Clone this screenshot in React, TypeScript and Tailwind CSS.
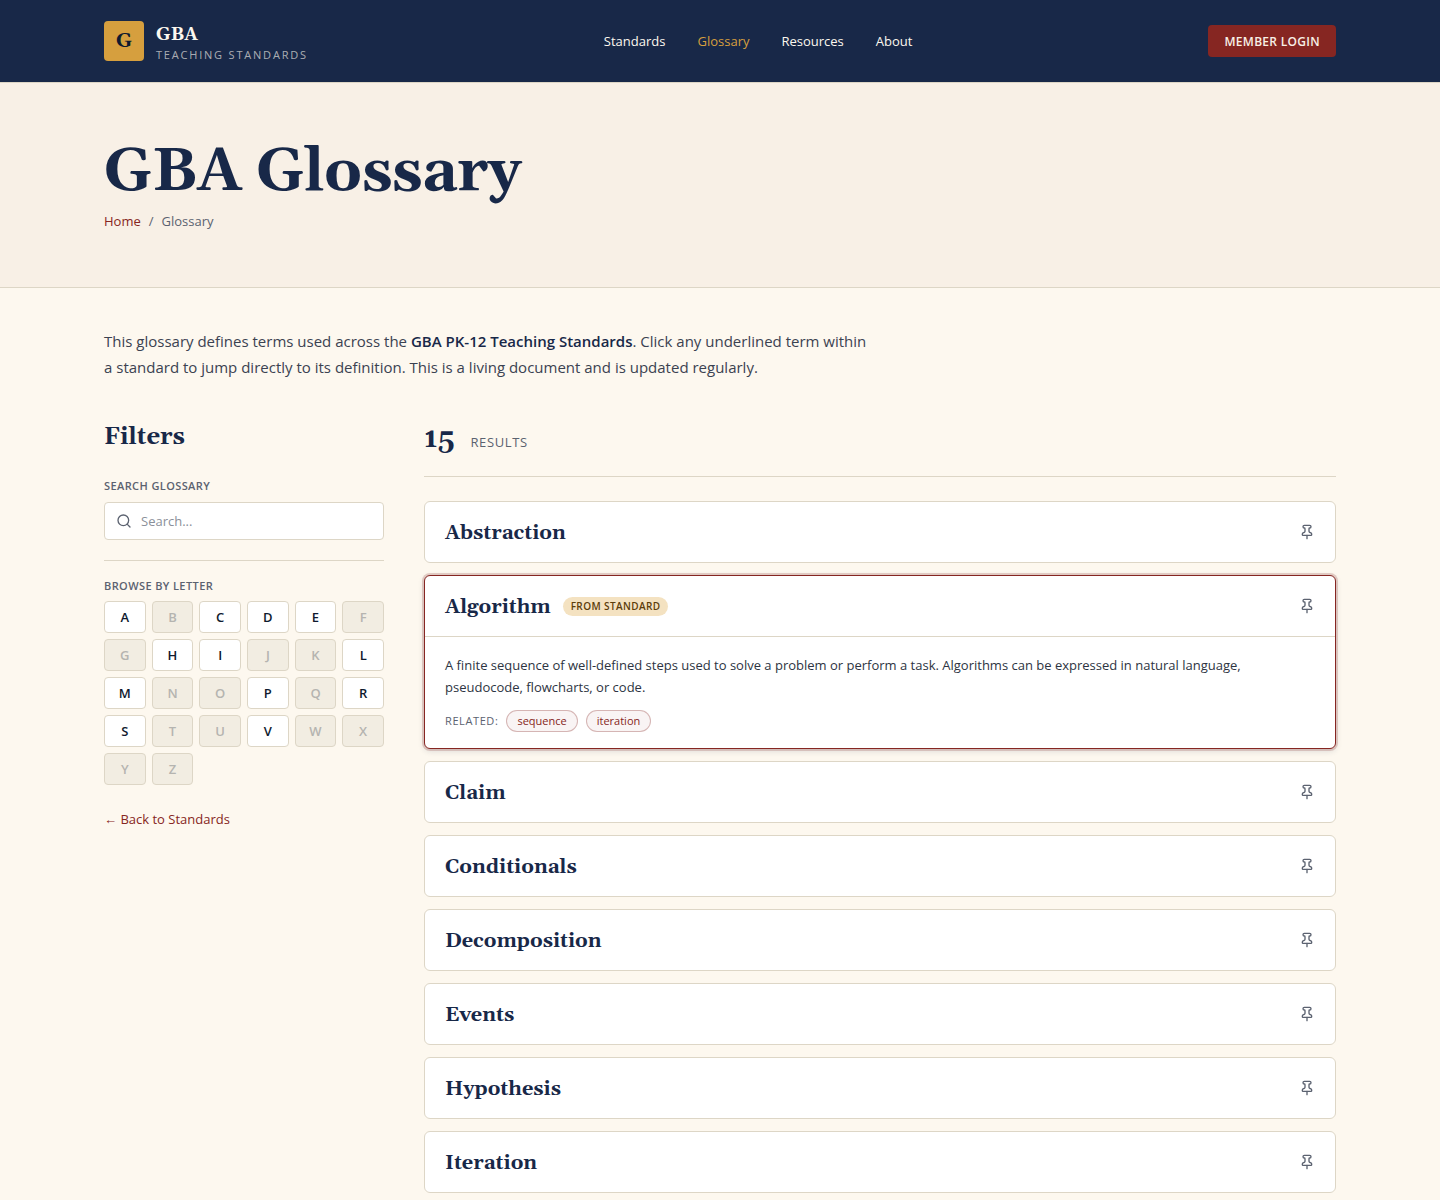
import { Pin, Search } from 'lucide-react';

interface Term {
  readonly name: string;
  readonly badge?: string;
  readonly definition?: string;
  readonly related?: readonly string[];
}

const NAV_ITEMS = ['Standards', 'Glossary', 'Resources', 'About'];

const LETTERS = 'ABCDEFGHIJKLMNOPQRSTUVWXYZ'.split('');
const ACTIVE_LETTERS = 'ACDEHILMPRSV';

const TERMS: readonly Term[] = [
  { name: 'Abstraction' },
  {
    name: 'Algorithm',
    badge: 'From standard',
    definition:
      'A finite sequence of well-defined steps used to solve a problem or perform a task. Algorithms can be expressed in natural language, pseudocode, flowcharts, or code.',
    related: ['sequence', 'iteration'],
  },
  { name: 'Claim' },
  { name: 'Conditionals' },
  { name: 'Decomposition' },
  { name: 'Events' },
  { name: 'Hypothesis' },
  { name: 'Iteration' },
];

function Header() {
  return (
    <header className="bg-[#182848] border-b border-[#ddd6c6]">
      <div className="max-w-7xl mx-auto px-6 py-[18px] flex items-center justify-between">
        <a href="#home" className="flex items-center gap-3">
          <span className="w-10 h-10 rounded bg-[#d69f3e] flex items-center justify-center font-[Georgia,Gelasio,'Liberation_Serif',serif] text-xl font-bold text-[#0f1a2e]">
            G
          </span>
          <span className="flex flex-col pt-1.5">
            <span className="font-[Georgia,Gelasio,'Liberation_Serif',serif] text-lg leading-[22px] font-bold text-[#fdf8ef]">
              GBA
            </span>
            <span className="text-[11px] leading-[18px] tracking-[1.8px] uppercase text-[#fdf8ef]/65">
              Teaching Standards
            </span>
          </span>
        </a>
        <nav className="flex gap-8">
          {NAV_ITEMS.map((item) => (
            <a
              key={item}
              href={`#${item.toLowerCase()}`}
              className={
                item === 'Glossary'
                  ? 'text-[13px] leading-5 font-medium text-[#d69f3e]'
                  : 'text-[13px] leading-5 font-medium text-[#fdf8ef]'
              }
            >
              {item}
            </a>
          ))}
        </nav>
        <button
          type="button"
          className="h-8 px-4 pt-0.5 rounded bg-[#862622] text-xs font-semibold tracking-[0.3px] uppercase text-[#f8f0e6]"
        >
          Member Login
        </button>
      </div>
    </header>
  );
}

function Hero() {
  return (
    <section className="bg-[#f8f0e6] border-b border-[#ddd6c6]">
      <div className="max-w-7xl mx-auto px-6 py-14">
        <h1 className="font-[Georgia,Gelasio,'Liberation_Serif',serif] text-[60px] leading-[68px] font-bold tracking-[-0.6px] text-[#182848]">
          GBA Glossary
        </h1>
        <nav aria-label="Breadcrumb" className="flex gap-2 mt-1 text-[13px] leading-5 text-[#5b6270]">
          <a href="#home" className="text-[#862622]">
            Home
          </a>
          <span>/</span>
          <span>Glossary</span>
        </nav>
      </div>
    </section>
  );
}

function Filters() {
  return (
    <aside className="w-70 shrink-0">
      <h2 className="font-[Georgia,Gelasio,'Liberation_Serif',serif] text-2xl leading-[34px] font-bold text-[#182848]">
        Filters
      </h2>
      <label
        htmlFor="search"
        className="block mt-6 text-[11px] leading-4 font-semibold tracking-[0.4px] uppercase text-[#5b6270]"
      >
        Search Glossary
      </label>
      <div className="mt-2 h-[38px] flex items-center gap-[9px] px-[11px] rounded border border-[#ddd6c6] bg-white">
        <Search size={16} className="text-[#5b6270]" />
        <input
          id="search"
          type="search"
          placeholder="Search..."
          className="flex-1 min-w-0 pt-0.5 text-[13px] outline-none placeholder:text-[#8b909a]"
        />
      </div>
      <hr className="mt-5 mb-[17px] border-[#ddd6c6]" />
      <h3 className="text-[11px] leading-4 font-semibold tracking-[0.4px] uppercase text-[#5b6270]">
        Browse by letter
      </h3>
      <div className="grid grid-cols-6 gap-1.5 mt-[7px]">
        {LETTERS.map((letter) => (
          <button
            key={letter}
            type="button"
            disabled={!ACTIVE_LETTERS.includes(letter)}
            className="h-8 pt-0.5 rounded border border-[#ddd6c6] bg-white text-[13px] font-semibold text-[#0f1a2e] disabled:bg-[#f2ede2] disabled:text-[#b5b4b0]"
          >
            {letter}
          </button>
        ))}
      </div>
      <a href="#standards" className="inline-block mt-6 text-[13px] leading-5 text-[#862622]">
        ← Back to Standards
      </a>
    </aside>
  );
}

function TermCard({ term }: { term: Term }) {
  return (
    <article
      className={
        term.definition
          ? 'rounded-md border border-[#862622] bg-white shadow-[0_0_0_2px_rgba(134,38,34,0.2),0_2px_6px_rgba(24,40,72,0.15)]'
          : 'rounded-md border border-[#ddd6c6] bg-white'
      }
    >
      <div className="h-15 px-5 flex items-center gap-3">
        <h3 className="pt-0.5 font-[Georgia,Gelasio,'Liberation_Serif',serif] text-xl font-bold text-[#182848]">
          {term.name}
        </h3>
        {term.badge && (
          <span className="px-2 rounded-full bg-[#f4e2c1] text-[10px] leading-[19px] font-semibold tracking-[0.4px] uppercase text-[#5c3d0a]">
            {term.badge}
          </span>
        )}
        <button type="button" aria-label={`Pin ${term.name}`} className="ml-auto text-[#5b6270]">
          <Pin size={16} />
        </button>
      </div>
      {term.definition && (
        <div className="border-t border-[#ddd6c6] px-5 pt-[17px] pb-4">
          <p className="text-[13px] leading-[22px] text-[#2d3442]">{term.definition}</p>
          <div className="flex items-center gap-2 mt-3">
            <span className="text-[11px] tracking-[0.6px] uppercase text-[#5b6270]">Related:</span>
            {term.related?.map((name) => (
              <a
                key={name}
                href={`#${name}`}
                className="px-2.5 rounded-full border border-[#862622]/30 bg-[#862622]/5 text-[11px] leading-5 text-[#862622]"
              >
                {name}
              </a>
            ))}
          </div>
        </div>
      )}
    </article>
  );
}

export default function App() {
  return (
    <div className="min-h-screen bg-[#fdf8ef] font-['Segoe_UI','Open_Sans','Noto_Sans',sans-serif]">
      <Header />
      <Hero />
      <main className="max-w-7xl mx-auto px-6 pt-10 pb-4">
        <p className="max-w-3xl text-[15px] leading-[26px] text-[#3b4251]">
          This glossary defines terms used across the{' '}
          <strong className="font-semibold text-[#182848]">GBA PK-12 Teaching Standards</strong>. Click any
          underlined term within a standard to jump directly to its definition. This is a living document and is
          updated regularly.
        </p>
        <div className="flex items-start gap-10 mt-10">
          <Filters />
          <section className="flex-1 min-w-0">
            <div className="flex items-baseline gap-4 pb-[18px] border-b border-[#ddd6c6]">
              <span className="font-[Georgia,Gelasio,'Liberation_Serif',serif] text-[28px] leading-[38px] font-bold text-[#182848]">
                15
              </span>
              <span className="text-[13px] tracking-[0.6px] uppercase text-[#5b6270]">Results</span>
            </div>
            <div className="flex flex-col gap-3 mt-6">
              {TERMS.map((term) => (
                <TermCard key={term.name} term={term} />
              ))}
            </div>
          </section>
        </div>
      </main>
    </div>
  );
}
